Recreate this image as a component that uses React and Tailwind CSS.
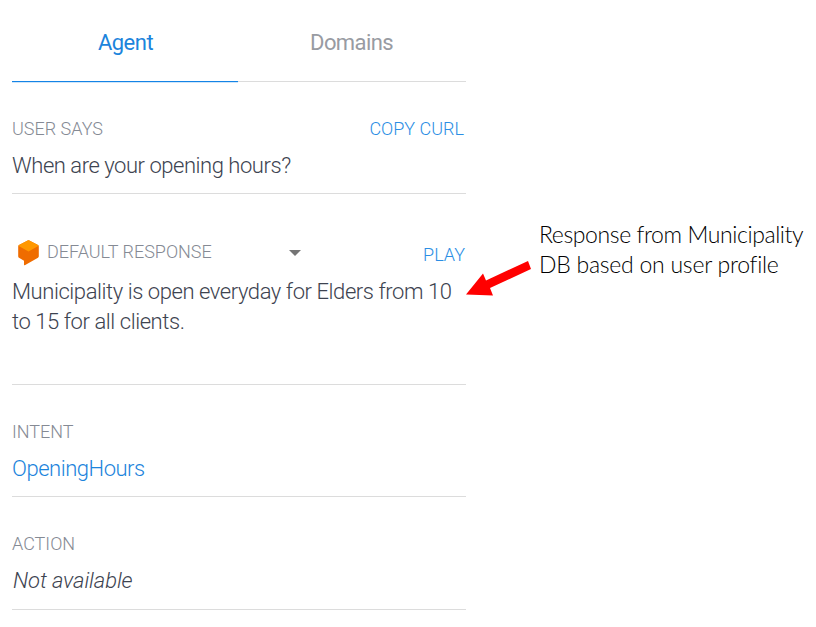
import React from "react";

const label = "text-[18px] font-light leading-[26px] text-[#858a94]";
const action = "text-[18px] font-light leading-[26px] text-[#2b8ee4]";
const body = "text-[22px] font-light leading-[30px] whitespace-nowrap";

export default function App() {
  return (
    <main className="relative h-[627px] w-[816px] overflow-hidden bg-white font-['Roboto',sans-serif] text-[#3d4350]">
      <div className="flex w-[466px] flex-col pl-3">
        <nav className="flex h-[82px] text-center text-[22px] leading-[30px]">
          <div className="flex w-[226px] flex-col pt-[28px] tracking-[-0.5px] text-[#1c84dc]">
            <span className="pl-px">Agent</span>
            <div className="mt-auto h-px bg-[#1484e6] shadow-[0_1px_0_#d0e6fa]" />
          </div>
          <div className="grow border-b border-[#dcdcdc] pt-[28px] pr-px tracking-[-0.6px] text-[#989ba2]">Domains</div>
        </nav>
        <section className="h-28 border-b border-[#dcdcdc] pt-[34px]">
          <div className="flex justify-between pr-[2px]">
            <span className={label}>USER SAYS</span>
            <span className={action}>COPY CURL</span>
          </div>
          <p className={`${body} mt-[9px] tracking-[-0.46px]`}>When are your opening hours?</p>
        </section>
        <section className="h-[191px] border-b border-[#dcdcdc] pt-[43px]">
          <div className="flex h-10 items-start pr-px">
            <svg className="ml-[6px] mt-[3px] h-[26px] w-[21px]" viewBox="0 0 21 26">
              <path d="M9.7.4Q10.5 0 11.3.4L20 5.1Q20.8 5.6 20.8 6.5V16.3Q20.8 17.2 20 17.7L6.8 25.2Q6 25.6 6 24.6V20.8L1 17.8Q.2 17.3.2 16.3V6.5Q.2 5.6 1 5.1Z" fill="#ef6c00" />
              <path d="M9.7.4Q10.5 0 11.3.4L20 5.1Q20.6 5.5 20.3 5.9L10.5 11.4.7 5.9Q.4 5.5 1 5.1Z" fill="#ff9800" />
            </svg>
            <span className={`${label} ml-[8px] mt-[2px]`}>DEFAULT RESPONSE</span>
            <svg className="ml-[77px] mt-[13px] h-[6px] w-[12px]" viewBox="0 0 12 6">
              <path d="M0 0H12L6 6Z" fill="#757575" />
            </svg>
            <span className={`${action} ml-auto mt-[5px]`}>PLAY</span>
          </div>
          <p className={`${body} tracking-[-0.43px]`}>Municipality is open everyday for Elders from 10<br />to 15 for all clients.</p>
        </section>
        <section className="h-28 border-b border-[#dcdcdc] pt-[34px]">
          <div className={label}>INTENT</div>
          <p className={`${body} mt-[9px] tracking-[-0.47px] text-[#1c84dc]`}>OpeningHours</p>
        </section>
        <section className="h-[113px] border-b border-[#dcdcdc] pt-[34px]">
          <div className={label}>ACTION</div>
          <p className={`${body} mt-[9px] pl-px italic tracking-[-0.1px]`}>Not available</p>
        </section>
      </div>
      <aside className="absolute left-[539px] top-[219px] whitespace-nowrap font-['Lato',sans-serif] text-[23px] font-light leading-[30px] text-black">
        <div className="tracking-[-0.4px]">Response from Municipality</div>
        <div className="tracking-[-0.25px]">DB based on user profile</div>
      </aside>
      <svg className="absolute left-[464px] top-[258px] h-[42px] w-[68px]" viewBox="464 258 68 42">
        <path d="M466 294.5 483 273.5 486 280.5 528 261 531 269 490 288 493 295.5Z" fill="#ff0000" />
      </svg>
    </main>
  );
}
